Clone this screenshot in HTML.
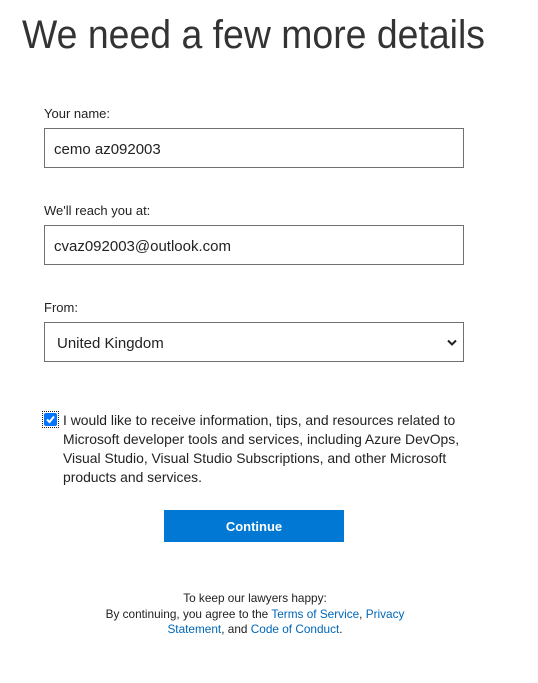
<!DOCTYPE html>
<html><head><meta charset="utf-8"><style>
body{margin:0;background:#fff;font-family:"Liberation Sans",sans-serif;color:#222;width:538px;height:683px;position:relative;overflow:hidden}
.a{position:absolute}
.lbl{font-size:13px;left:44px}
.box{left:44px;width:418px;height:38px;border:1px solid #707070;font-size:15px;line-height:42px;box-sizing:content-box}
a{color:#0067b8;text-decoration:none}
</style></head><body>
<svg class="a" style="left:0;top:0" width="538" height="60"><text x="22" y="48" font-family="Liberation Sans" font-size="40" fill="#333" textLength="463" lengthAdjust="spacingAndGlyphs">We need a few more details</text></svg>
<div class="a lbl" style="top:106px">Your name:</div>
<div class="a box" style="top:128px"><span style="padding-left:9px">cemo az092003</span></div>
<div class="a lbl" style="top:203px">We'll reach you at:</div>
<div class="a box" style="top:225px"><span style="padding-left:9px">cvaz092003@outlook.com</span></div>
<div class="a lbl" style="top:300px">From:</div>
<div class="a box" style="top:322px"><span style="padding-left:12px">United Kingdom</span>
<svg class="a" style="right:6px;top:16px" width="10" height="8"><path d="M1 1.5L5 5.5L9 1.5" stroke="#222" stroke-width="2" fill="none"/></svg></div>
<div class="a" style="left:42px;top:411px;width:17px;height:17px;border:1px dotted #222;box-sizing:border-box"></div>
<div class="a" style="left:44px;top:413px;width:13px;height:13px;background:#0075ff;border-radius:2px">
<svg width="13" height="13"><path d="M3 6.5L5.5 9L10 3.5" stroke="#fff" stroke-width="2" fill="none"/></svg></div>
<div class="a" style="left:63px;top:411px;width:410px;font-size:13.9px;line-height:19px">I would like to receive information, tips, and resources related to Microsoft developer tools and services, including Azure DevOps, Visual Studio, Visual Studio Subscriptions, and other Microsoft products and services.</div>
<div class="a" style="left:164px;top:510px;width:180px;height:32px;background:#0078d4;color:#fff;font-size:13px;font-weight:bold;text-align:center;line-height:33px">Continue</div>
<div class="a" style="left:80px;top:591px;width:350px;text-align:center;font-size:11.8px;line-height:15.5px">To keep our lawyers happy:<br>By continuing, you agree to the <a>Terms of Service</a>, <a>Privacy<br>Statement</a>, and <a>Code of Conduct</a>.</div>
</body></html>
